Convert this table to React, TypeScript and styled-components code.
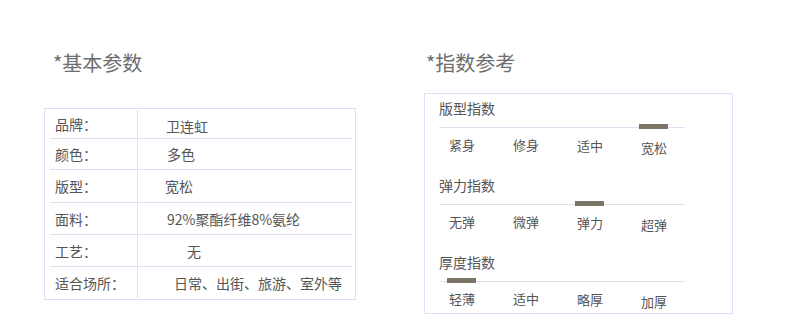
import React from "react";
import styled, { createGlobalStyle } from "styled-components";

const GlobalStyle = createGlobalStyle`
  *, *::before, *::after {
    box-sizing: border-box;
  }
  html, body {
    margin: 0;
    padding: 0;
    background: #ffffff;
  }
  body {
    font-family: "Noto Sans CJK SC", "Noto Sans", sans-serif;
    color: #555555;
  }
`;

const Page = styled.div`
  display: flex;
  align-items: flex-start;
  padding: 49px 0 0 44px;
`;

const Column = styled.section<{ $width: number; $gap?: number }>`
  display: flex;
  flex-direction: column;
  width: ${(p) => p.$width}px;
  margin-left: ${(p) => p.$gap ?? 0}px;
`;

const Heading = styled.h2<{ $indent: number }>`
  margin: 0 0 0 ${(p) => p.$indent}px;
  font-size: 20px;
  line-height: 28px;
  font-weight: 400;
  color: #6e6e6e;
`;

/* ---------- basic parameters table ---------- */

const Table = styled.div`
  margin-top: 31px;
  border: 1px solid #dedcf2;
  padding: 1px 3px 1px 5px;
  display: flex;
  flex-direction: column;
`;

const Row = styled.div<{ $height: number; $last?: boolean }>`
  display: flex;
  height: ${(p) => p.$height}px;
  border-bottom: ${(p) => (p.$last ? "none" : "1px solid #dfe0f3")};
  font-size: 14px;
  line-height: 20px;
`;

const LabelCell = styled.div`
  width: 88px;
  flex-shrink: 0;
  padding-left: 5px;
  border-right: 1px solid #dfe0f3;
  display: flex;
  align-items: center;
  white-space: nowrap;
  color: #555555;
`;

const ValueCell = styled.div<{ $indent: number; $drop: number }>`
  flex: 1;
  display: flex;
  align-items: center;
  padding-left: ${(p) => p.$indent}px;
  padding-top: ${(p) => p.$drop}px;
  white-space: nowrap;
  color: #555555;
`;

/* ---------- index reference panel ---------- */

const Panel = styled.div`
  margin-top: 16px;
  border: 1px solid #dfe0f3;
  padding: 4px 0 4px 14px;
  display: flex;
  flex-direction: column;
  gap: 20px;
`;

const Scale = styled.div`
  display: flex;
  flex-direction: column;
`;

const ScaleTitle = styled.div`
  font-size: 14px;
  line-height: 20px;
  height: 20px;
  color: #555555;
`;

const Track = styled.div`
  position: relative;
  width: 246px;
  height: 8px;
  margin-top: 5px;
  &::before {
    content: "";
    position: absolute;
    left: 0;
    right: 0;
    top: 4px;
    height: 1px;
    background: #dfe0ef;
  }
`;

const Steps = styled.div`
  display: flex;
  padding-left: 8px;
  height: 100%;
`;

const Step = styled.div`
  position: relative;
  flex: 0 0 64px;
`;

const Marker = styled.div`
  position: absolute;
  left: 0;
  top: 1px;
  width: 29px;
  height: 5px;
  background: #7a7566;
`;

const Labels = styled.div`
  display: flex;
  padding-left: 8px;
  margin-top: 4px;
`;

const Label = styled.div<{ $drop: number }>`
  flex: 0 0 64px;
  padding-left: 2px;
  padding-top: ${(p) => p.$drop}px;
  font-size: 13px;
  line-height: 20px;
  height: 20px;
  white-space: nowrap;
  color: #555555;
`;

const params = [
  { label: "品牌：", value: "卫连虹", height: 29, indent: 28, drop: 3 },
  { label: "颜色：", value: "多色", height: 31, indent: 29, drop: 0 },
  { label: "版型：", value: "宽松", height: 33, indent: 27, drop: 0 },
  { label: "面料：", value: "92%聚酯纤维8%氨纶", height: 32, indent: 29, drop: 0 },
  { label: "工艺：", value: "无", height: 32, indent: 49, drop: 0 },
  { label: "适合场所：", value: "日常、出街、旅游、室外等", height: 31, indent: 36, drop: 0 },
];

const scales = [
  { title: "版型指数", steps: ["紧身", "修身", "适中", "宽松"], active: 3 },
  { title: "弹力指数", steps: ["无弹", "微弹", "弹力", "超弹"], active: 2 },
  { title: "厚度指数", steps: ["轻薄", "适中", "略厚", "加厚"], active: 0 },
];

const labelDrop = [0, 0, 1, 3];

export default function App() {
  return (
    <>
      <GlobalStyle />
      <Page>
        <Column $width={312}>
          <Heading $indent={9}>*基本参数</Heading>
          <Table>
            {params.map((p, i) => (
              <Row key={p.label} $height={p.height} $last={i === params.length - 1}>
                <LabelCell>{p.label}</LabelCell>
                <ValueCell $indent={p.indent} $drop={p.drop}>
                  {p.value}
                </ValueCell>
              </Row>
            ))}
          </Table>
        </Column>
        <Column $width={309} $gap={68}>
          <Heading $indent={2}>*指数参考</Heading>
          <Panel>
            {scales.map((s) => (
              <Scale key={s.title}>
                <ScaleTitle>{s.title}</ScaleTitle>
                <Track>
                  <Steps>
                    {s.steps.map((step, i) => (
                      <Step key={step}>{i === s.active && <Marker />}</Step>
                    ))}
                  </Steps>
                </Track>
                <Labels>
                  {s.steps.map((step, i) => (
                    <Label key={step} $drop={labelDrop[i]}>
                      {step}
                    </Label>
                  ))}
                </Labels>
              </Scale>
            ))}
          </Panel>
        </Column>
      </Page>
    </>
  );
}
